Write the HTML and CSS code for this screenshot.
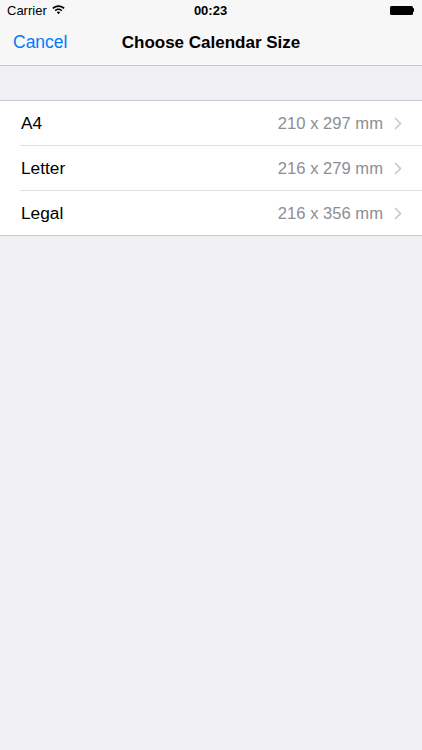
FILE: index.html
```html
<!DOCTYPE html>
<html lang="en">
<head>
    <meta charset="UTF-8">
    <meta name="viewport" content="width=device-width, initial-scale=1.0">
    <title>Choose Calendar Size</title>
    <link rel="stylesheet" href="styles.css">
</head>
<body>
    <div class="top-bar">
        <!-- Status bar -->
        <div class="status-bar">
            <div class="status-left">
                <span>Carrier</span>
                <svg class="wifi" width="13" height="10" viewBox="0 0 13 10">
                    <path d="M6.5 0.3C4.1 0.3 1.9 1.2 0.3 2.7L1.5 3.9C2.8 2.7 4.6 1.9 6.5 1.9C8.4 1.9 10.2 2.7 11.5 3.9L12.7 2.7C11.1 1.2 8.9 0.3 6.5 0.3Z" fill="#000"/>
                    <path d="M6.5 3.4C5 3.4 3.6 4 2.6 5L3.8 6.2C4.5 5.5 5.4 5.1 6.5 5.1C7.6 5.1 8.5 5.5 9.2 6.2L10.4 5C9.4 4 8 3.4 6.5 3.4Z" fill="#000"/>
                    <path d="M6.5 6.5C5.8 6.5 5.2 6.8 4.8 7.2L6.5 9.3L8.2 7.2C7.8 6.8 7.2 6.5 6.5 6.5Z" fill="#000"/>
                </svg>
            </div>
            <div class="status-time">00:23</div>
            <div class="status-right">
                <div class="battery"></div>
                <div class="battery-tip"></div>
            </div>
        </div>

        <!-- Navigation bar -->
        <div class="nav-bar">
            <span class="nav-cancel">Cancel</span>
            <span class="nav-title">Choose Calendar Size</span>
        </div>
    </div>

    <div class="table">
        <div class="row">
            <span class="row-label">A4</span>
            <span class="row-detail">210 x 297 mm</span>
            <svg class="chevron" width="8" height="13" viewBox="0 0 8 13">
                <path d="M1 1L6.5 6.5L1 12" fill="none" stroke="#c7c7cc" stroke-width="1.6"/>
            </svg>
        </div>
        <div class="row">
            <span class="row-label">Letter</span>
            <span class="row-detail">216 x 279 mm</span>
            <svg class="chevron" width="8" height="13" viewBox="0 0 8 13">
                <path d="M1 1L6.5 6.5L1 12" fill="none" stroke="#c7c7cc" stroke-width="1.6"/>
            </svg>
        </div>
        <div class="row">
            <span class="row-label">Legal</span>
            <span class="row-detail">216 x 356 mm</span>
            <svg class="chevron" width="8" height="13" viewBox="0 0 8 13">
                <path d="M1 1L6.5 6.5L1 12" fill="none" stroke="#c7c7cc" stroke-width="1.6"/>
            </svg>
        </div>
    </div>
</body>
</html>
```

FILE: styles.css
```css
* {
    margin: 0;
    padding: 0;
    box-sizing: border-box;
}

body {
    font-family: 'Liberation Sans', Arial, sans-serif;
    background: #efeff4;
    color: #000;
    height: 100vh;
    overflow: hidden;
}

.top-bar {
    background: #f7f7f7;
    border-bottom: 1px solid #c8c7cc;
    height: 66px;
}

.status-bar {
    height: 20px;
    display: flex;
    align-items: center;
    justify-content: space-between;
    padding: 0 8px 0 7px;
    font-size: 13px;
}

.status-left {
    display: flex;
    align-items: center;
    gap: 5px;
    width: 100px;
}

.wifi {
    margin-top: -1px;
}

.status-time {
    font-weight: bold;
    font-size: 13px;
}

.status-right {
    display: flex;
    align-items: center;
    justify-content: flex-end;
    width: 100px;
}

.battery {
    width: 23px;
    height: 9px;
    background: #000;
    border-radius: 1.5px;
}

.battery-tip {
    width: 1.5px;
    height: 4px;
    background: #000;
    border-radius: 0 1px 1px 0;
}

.nav-bar {
    height: 45px;
    display: flex;
    align-items: center;
    position: relative;
    padding: 0 13px;
}

.nav-cancel {
    color: #007aff;
    font-size: 17.5px;
}

.nav-title {
    position: absolute;
    left: 0;
    right: 0;
    text-align: center;
    font-weight: bold;
    font-size: 17px;
    pointer-events: none;
}

.table {
    margin-top: 34px;
    background: #fff;
    border-top: 1px solid #c8c7cc;
    border-bottom: 1px solid #c8c7cc;
}

.row {
    display: flex;
    align-items: center;
    height: 44px;
    padding: 1px 20px 0 21px;
    position: relative;
}

.row + .row {
    height: 45px;
    padding-top: 2px;
}

.row + .row::before {
    content: "";
    position: absolute;
    top: 0;
    left: 20px;
    right: 0;
    border-top: 1px solid #e0e0e3;
}

.row-label {
    font-size: 17.3px;
    flex: 1;
}

.row-detail {
    font-size: 16.6px;
    color: #8e8e93;
    margin-right: 11px;
}

.chevron {
    display: block;
}
```
